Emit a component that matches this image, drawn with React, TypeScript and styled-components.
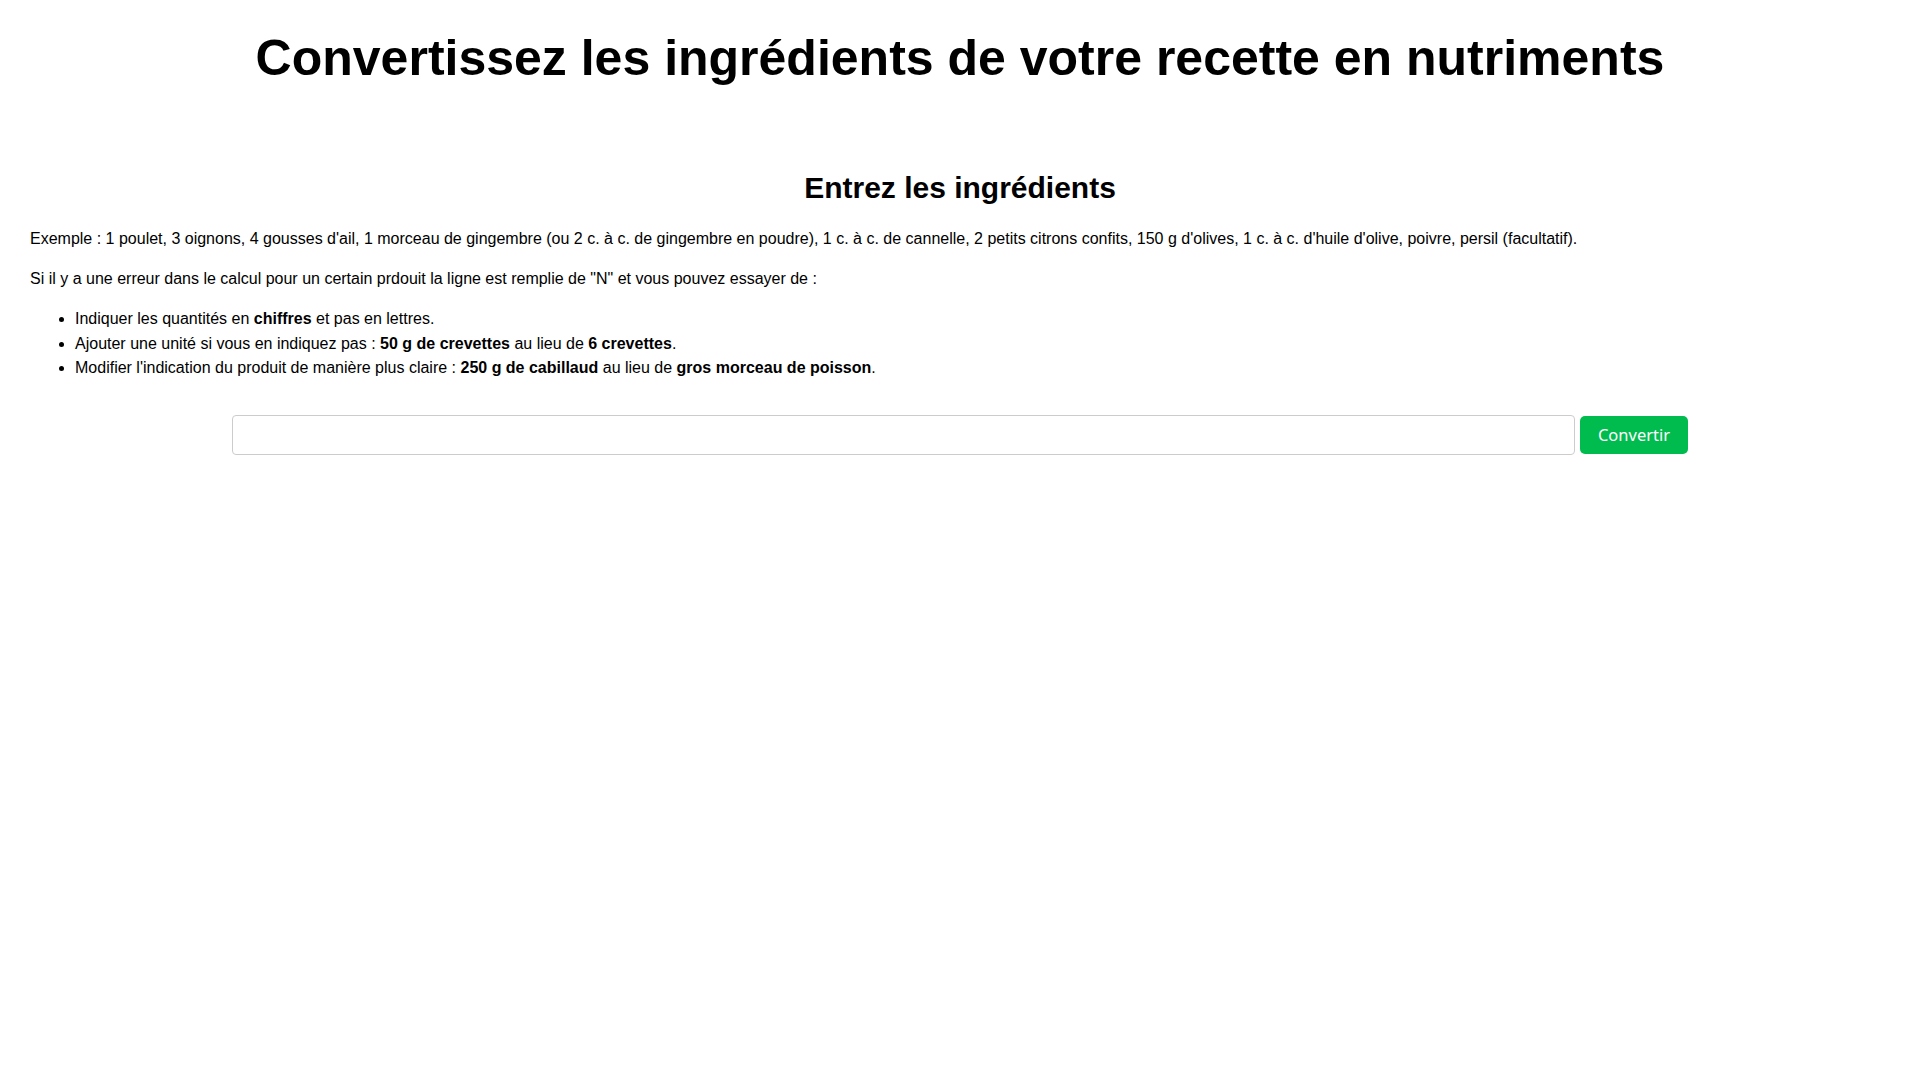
import React from "react";
import styled, { createGlobalStyle } from "styled-components";

const GlobalStyle = createGlobalStyle`
  html, body {
    margin: 0;
    padding: 0;
    background: #ffffff;
  }
  body {
    font-family: "Liberation Sans", Arial, sans-serif;
    color: #000000;
  }
`;

const Page = styled.div`
  display: flex;
  flex-direction: column;
  padding: 30px 30px 0;
`;

const Title = styled.h1`
  margin: 0;
  font-size: 50px;
  line-height: 57.5px;
  font-weight: 700;
  text-align: center;
`;

const Section = styled.section`
  display: flex;
  flex-direction: column;
  margin-top: 83.5px;
`;

const Subtitle = styled.h2`
  margin: 0 0 21.5px;
  font-size: 30px;
  line-height: 34.5px;
  font-weight: 700;
  text-align: center;
`;

const Paragraph = styled.p`
  margin: 0 0 16px;
  font-size: 16px;
  line-height: 24px;
`;

const Tips = styled.ul`
  margin: 0;
  padding-left: 45px;
  font-size: 16px;
  line-height: 24.5px;
`;

const Tip = styled.li`
  margin: 0;
`;

const Form = styled.form`
  display: flex;
  justify-content: center;
  align-items: center;
  gap: 5px;
  margin-top: 34px;
`;

const Input = styled.input`
  box-sizing: border-box;
  width: 1343px;
  height: 40px;
  border: 1px solid #cccccc;
  border-radius: 4px;
  padding: 0 10px;
  font-family: "Liberation Sans", Arial, sans-serif;
  font-size: 16px;
  outline: none;
`;

const Button = styled.button`
  box-sizing: border-box;
  width: 108px;
  height: 38px;
  border: none;
  border-radius: 5px;
  background: #00bb4e;
  color: #ffffff;
  font-family: "Noto Sans", "Open Sans", sans-serif;
  font-size: 16.5px;
  cursor: pointer;
`;

export default function App() {
  return (
    <>
      <GlobalStyle />
      <Page>
        <Title>Convertissez les ingrédients de votre recette en nutriments</Title>
        <Section>
          <Subtitle>Entrez les ingrédients</Subtitle>
          <Paragraph>
            Exemple : 1 poulet, 3 oignons, 4 gousses d'ail, 1 morceau de gingembre (ou 2 c. à c. de
            gingembre en poudre), 1 c. à c. de cannelle, 2 petits citrons confits, 150 g d'olives, 1 c.
            à c. d'huile d'olive, poivre, persil (facultatif).
          </Paragraph>
          <Paragraph>
            Si il y a une erreur dans le calcul pour un certain prdouit la ligne est remplie de "N" et
            vous pouvez essayer de :
          </Paragraph>
          <Tips>
            <Tip>
              Indiquer les quantités en <b>chiffres</b> et pas en lettres.
            </Tip>
            <Tip>
              Ajouter une unité si vous en indiquez pas : <b>50 g de crevettes</b> au lieu de{" "}
              <b>6 crevettes</b>.
            </Tip>
            <Tip>
              Modifier l'indication du produit de manière plus claire : <b>250 g de cabillaud</b> au
              lieu de <b>gros morceau de poisson</b>.
            </Tip>
          </Tips>
          <Form onSubmit={(e) => e.preventDefault()}>
            <Input type="text" />
            <Button type="submit">Convertir</Button>
          </Form>
        </Section>
      </Page>
    </>
  );
}
